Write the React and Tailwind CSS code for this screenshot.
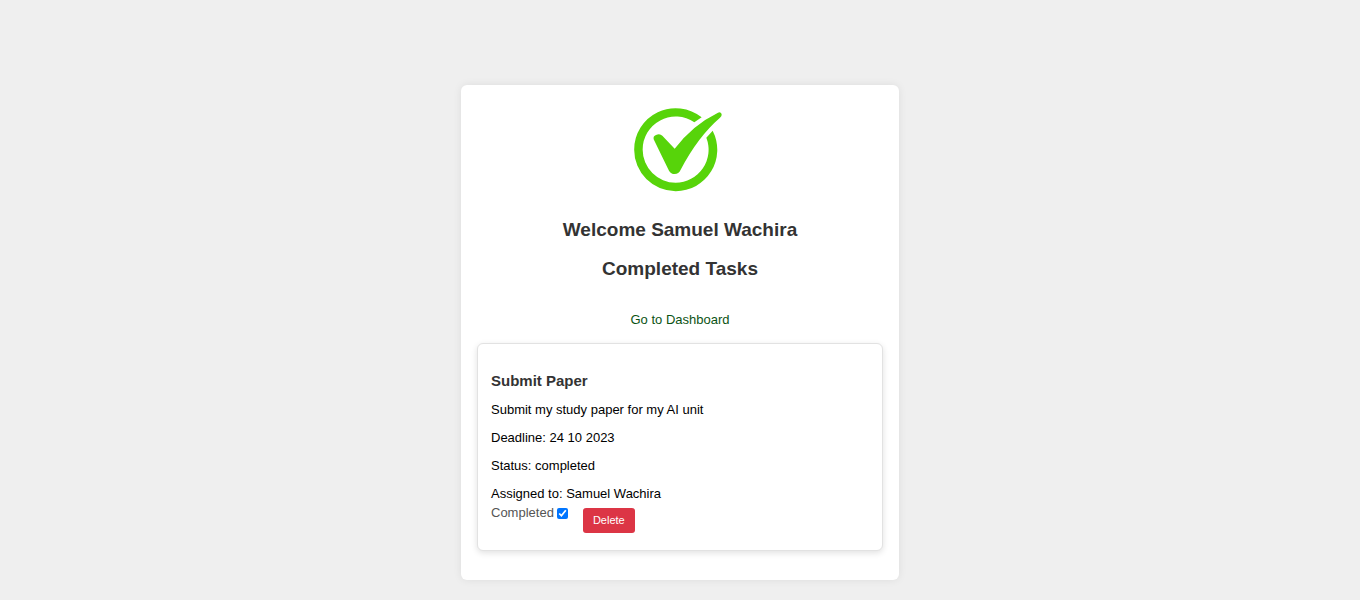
import { useState } from "react";

function Logo() {
  return (
    <svg viewBox="0 0 360 330" className="h-[110px] w-[120px]" role="img" aria-label="Check mark" fill="#57d40a">
      <path d="M245 67 A124.5 124.5 0 0 0 42.5 164 A124.5 124.5 0 0 0 167 288.5 A124.5 124.5 0 0 0 278 107 L259 128 A99 99 0 0 1 167 263 A99 99 0 0 1 68 164 A99 99 0 0 1 223 82 Z" />
      <path d="M101 133 Q99 123 108 120 Q119 114 127 122 L164 161 Q218 90 294 53 Q302 50 305 57 Q306 63 300 68 Q233 126 182 224 Q176 237 164 237 Q153 237 147 227 Q123 179 101 133 Z" />
    </svg>
  );
}

function Task({ title, details }) {
  const [done, setDone] = useState(true);
  return (
    <article className="mt-[15px] rounded-md border border-[#e2e2e2] bg-white px-[13px] pt-[27px] pb-[17px] shadow-[0_2px_6px_rgba(0,0,0,0.12)]">
      <h3 className="text-[15px] leading-5 font-bold text-[#333]">{title}</h3>
      <div className="mt-[11px] flex flex-col gap-3">
        {details.map((line) => (
          <p key={line}>{line}</p>
        ))}
      </div>
      <div className="flex items-start pt-[3px]">
        <label className="flex items-center gap-[3px] text-[#555]">
          Completed
          <input
            type="checkbox"
            className="size-[11px]"
            checked={done}
            onChange={(e) => setDone(e.target.checked)}
          />
        </label>
        <button type="button" className="mt-[3px] ml-[15px] rounded-[3px] bg-[#dc3545] px-[10px] py-[5px] text-[11px] leading-[15px] text-white">
          Delete
        </button>
      </div>
    </article>
  );
}

export default function App() {
  return (
    <div className="flex min-h-screen items-start justify-center bg-[#efefef] pt-[85px] pb-5 font-['Liberation_Sans',Arial,sans-serif] text-[13px] leading-4 text-black">
      <main className="w-full max-w-[438px] rounded-md bg-white px-4 pt-[10px] pb-[29px] shadow-[0_0_8px_rgba(0,0,0,0.08)]">
        <header className="flex flex-col items-center">
          <Logo />
          <h1 className="mt-[13px] text-[19px] leading-6 font-bold text-[#333]">Welcome Samuel Wachira</h1>
          <h2 className="mt-[15px] text-[19px] leading-6 font-bold text-[#333]">Completed Tasks</h2>
          <a href="#dashboard" className="mt-[31px] text-[#0b5314]">Go to Dashboard</a>
        </header>
        <Task
          title="Submit Paper"
          details={[
            "Submit my study paper for my AI unit",
            "Deadline: 24 10 2023",
            "Status: completed",
            "Assigned to: Samuel Wachira",
          ]}
        />
      </main>
    </div>
  );
}
